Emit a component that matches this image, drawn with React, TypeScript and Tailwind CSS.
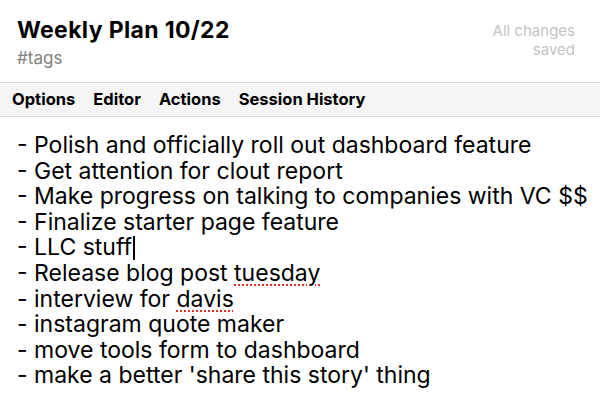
import React from "react";

const lines: { pre: string; miss?: string; post?: string; caret?: boolean }[] = [
  { pre: "- Polish and officially roll out dashboard feature" },
  { pre: "- Get attention for clout report" },
  { pre: "- Make progress on talking to companies with VC $$" },
  { pre: "- Finalize starter page feature" },
  { pre: "- LLC stuff", caret: true },
  { pre: "- Release blog post ", miss: "tuesday" },
  { pre: "- interview for ", miss: "davis" },
  { pre: "- instagram quote maker" },
  { pre: "- move tools form to dashboard" },
  { pre: "- make a better 'share this story' thing" },
];

export default function App() {
  return (
    <div className="w-[600px] h-[406px] bg-white overflow-hidden text-black" style={{ fontFamily: "Inter, 'Noto Sans', sans-serif" }}>
      <div className="flex justify-between h-[82px] pl-[17px] pr-[25px]">
        <div className="pt-[15px]">
          <div className="text-[23px] font-bold leading-[30px] tracking-[0.35px]">Weekly Plan 10/22</div>
          <div className="text-[17px] text-[#808080] leading-[22px] mt-[2px]">#tags</div>
        </div>
        <div className="pt-[21px] text-right text-[15px] leading-[19px] text-[#c3c3c3]">
          <div>All changes</div>
          <div>saved</div>
        </div>
      </div>
      <div className="h-[35px] bg-[#f5f5f5] border-y border-[#d8d8d8] flex items-center gap-[18px] pl-[12px] text-[16.5px] font-bold">
        <span>Options</span>
        <span>Editor</span>
        <span>Actions</span>
        <span>Session History</span>
      </div>
      <div className="pl-[17px] pt-[16px] text-[23px] leading-[25.6px]">
        {lines.map((l, i) => (
          <div key={i} className="whitespace-pre">
            {l.pre}
            {l.miss && (
              <span className="underline decoration-dotted decoration-[#e0302a] decoration-2 underline-offset-[4px]">{l.miss}</span>
            )}
            {l.caret && <span className="inline-block w-[1.5px] h-[24px] bg-black align-[-5px] ml-[1px]"></span>}
          </div>
        ))}
      </div>
    </div>
  );
}
